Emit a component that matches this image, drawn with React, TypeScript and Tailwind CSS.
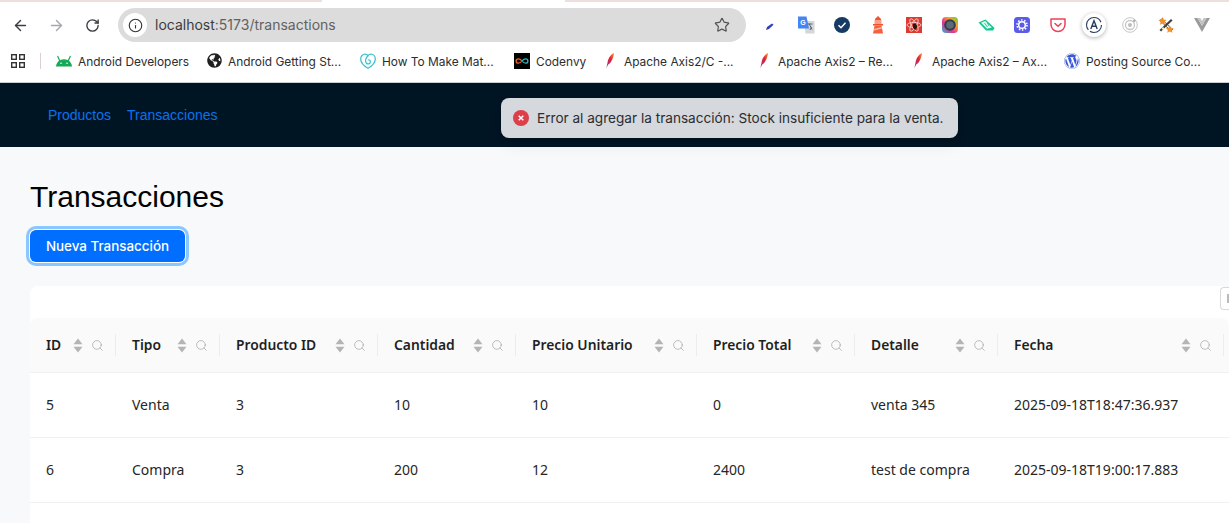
import { ArrowLeft, ArrowRight, Info, RotateCw, Search, Star } from "lucide-react";
import { FaGlobeAmericas, FaWordpress } from "react-icons/fa";

const inter = "font-['Inter','Noto_Sans',sans-serif]";

function Feather() {
  return (
    <svg width="10" height="18" viewBox="0 0 10 18">
      <defs>
        <linearGradient id="feather" x1="1" y1="0" x2="0" y2="1">
          <stop offset="0" stopColor="#f59a23" />
          <stop offset="0.4" stopColor="#e0253a" />
          <stop offset="0.8" stopColor="#b0287a" />
          <stop offset="1" stopColor="#cfcfd8" />
        </linearGradient>
      </defs>
      <path d="M9 1C5.500 2.500 3 6.500 2.500 11L1 17l2.200-4.600C6.500 11 8.500 5.500 9 1z" fill="url(#feather)" />
    </svg>
  );
}

function AndroidHead() {
  return (
    <svg width="16" height="12" viewBox="0 0 16 12">
      <path d="M0 11.500C.3 7.500 3.500 4.300 8 4.300s7.700 3.200 8 7.200z" fill="#18a957" />
      <path d="M3.600 5.600 1.800 1.400M12.400 5.600l1.800-4.200" stroke="#18a957" strokeWidth="1.200" strokeLinecap="round" />
      <circle cx="5" cy="8.300" r=".8" fill="#fff" />
      <circle cx="11" cy="8.300" r=".8" fill="#fff" />
    </svg>
  );
}

function SwirlHeart() {
  return (
    <svg width="16" height="16" viewBox="0 0 16 16" fill="none" stroke="#3cc3cf" strokeWidth="1.300">
      <path d="M8 15.200C3.200 12.500.7 9.500.7 6c0-2.800 2.100-4.800 4.500-4.800 1.300 0 2.200.6 2.800 1.400.7-.8 1.600-1.400 2.800-1.400 2.400 0 4.500 2 4.500 4.800 0 3.500-2.500 6.500-7.300 9.200z" />
      <path d="M8 2.800C5.800 5 4.800 7.800 6.300 10c1.200 1.600 3.800 1 4.100-.9.200-1.400-.9-2.400-2.200-2.200" />
    </svg>
  );
}

function Codenvy() {
  return (
    <svg width="16" height="16" viewBox="0 0 16 16" fill="none" strokeWidth="1.300">
      <rect width="16" height="16" fill="#000" />
      <path d="M8 8C6.800 6.300 5.600 5.800 4.300 5.800A2.200 2.200 0 0 0 4.300 10.200C5.600 10.200 6.800 9.700 8 8" stroke="#e8622c" />
      <path d="M8 8c1.200-1.700 2.400-2.200 3.700-2.200a2.200 2.200 0 0 1 0 4.400C10.400 10.200 9.200 9.700 8 8" stroke="#27b5c9" />
    </svg>
  );
}

const bookmarks = [
  { label: "Android Developers", width: "w-[150px]", icon: <AndroidHead /> },
  { label: "Android Getting St...", width: "w-[154px]", icon: <FaGlobeAmericas size={15} color="#1f1f1f" /> },
  { label: "How To Make Mat...", width: "w-[154px]", icon: <SwirlHeart /> },
  { label: "Codenvy", width: "w-[88px]", icon: <Codenvy /> },
  { label: "Apache Axis2/C -...", width: "w-[154px]", icon: <Feather /> },
  { label: "Apache Axis2 – Re...", width: "w-[154px]", icon: <Feather /> },
  { label: "Apache Axis2 – Ax...", width: "w-[154px]", icon: <Feather /> },
  { label: "Posting Source Co...", width: "w-[160px]", icon: <FaWordpress size={16} color="#3858d6" /> },
];

function Ext({ children }: { children: React.ReactNode }) {
  return <div className="w-9 h-[34px] flex items-center justify-center shrink-0">{children}</div>;
}

function ExtensionIcons() {
  return (
    <div className="flex items-center ml-[6px]">
      <Ext>
        <svg width="16" height="16" viewBox="0 0 16 16"><path d="M4 13 5 10 10 6.500 11.500 7.800 7 12z" fill="#2f3fb8" /></svg>
      </Ext>
      <Ext>
        <svg width="18" height="18" viewBox="0 0 18 18">
          <path d="M7 5h10.500v12.500H8.500z" fill="#d6d6d6" />
          <path d="M12 7.500l3 6M15.500 8h-4.500M13 14l1.500-3" stroke="#5b6470" strokeWidth="1" fill="none" />
          <path d="M1 .5h8.500L12 12.500H1z" fill="#4285f4" />
          <text x="3.200" y="8.800" fontSize="7" fontWeight="700" fill="#fff" fontFamily="Liberation Sans, sans-serif">G</text>
        </svg>
      </Ext>
      <Ext>
        <svg width="16" height="16" viewBox="0 0 16 16">
          <circle cx="8" cy="8" r="8" fill="#163a63" />
          <path d="M4.500 8.300 7 10.700 11.500 5.800" stroke="#fff" strokeWidth="1.500" fill="none" />
        </svg>
      </Ext>
      <Ext>
        <svg width="14" height="18" viewBox="0 0 14 18">
          <path d="M7 0 10 3v1H4V3z" fill="#f2502e" />
          <rect x="3.500" y="4" width="7" height="4" fill="#f6a089" />
          <rect x="2" y="8" width="10" height="1.500" fill="#f2502e" />
          <path d="M3.500 9.500h7l1.500 8H2z" fill="#f4613f" />
          <path d="M3 13l8-2v1.500l-8 2z" fill="#fbb8a6" />
        </svg>
      </Ext>
      <Ext>
        <svg width="16" height="16" viewBox="0 0 16 16">
          <rect width="16" height="16" fill="#dc3b32" />
          <g fill="none" stroke="#f8d8d4" strokeWidth=".8">
            <ellipse cx="8" cy="8" rx="7" ry="2.600" />
            <ellipse cx="8" cy="8" rx="7" ry="2.600" transform="rotate(60 8 8)" />
            <ellipse cx="8" cy="8" rx="7" ry="2.600" transform="rotate(120 8 8)" />
          </g>
          <path d="M7 7l3-.5 1.500 3.500-2.500 3L7 10.500z" fill="#2a1512" />
        </svg>
      </Ext>
      <Ext>
        <svg width="16" height="16" viewBox="0 0 16 16">
          <defs>
            <linearGradient id="rainbow" x1="0" y1="1" x2="1" y2="0">
              <stop offset="0" stopColor="#20c4c4" />
              <stop offset="0.35" stopColor="#e02f9c" />
              <stop offset="0.7" stopColor="#f6a623" />
              <stop offset="1" stopColor="#4fd04f" />
            </linearGradient>
          </defs>
          <rect width="16" height="16" rx="4" fill="url(#rainbow)" />
          <circle cx="8" cy="8" r="5.800" fill="#2f3e4c" />
          <circle cx="8" cy="8" r="3.800" fill="#5b6b7a" />
        </svg>
      </Ext>
      <Ext>
        <svg width="17" height="12" viewBox="0 0 17 12">
          <path d="M.5 3.500 7.500.5 16.500 9 15 11.500H8z" fill="#0fc78f" />
          <path d="M3 3.800 7.200 2 13.800 8.500 9 9.700z" fill="#e2fcf3" />
          <path d="M6.500 4 9.500 8M9.500 4l1.500 3" stroke="#0fc78f" strokeWidth=".9" />
        </svg>
      </Ext>
      <Ext>
        <svg width="16" height="16" viewBox="0 0 16 16">
          <rect width="16" height="16" rx="3.500" fill="#5a5be6" />
          <circle cx="8" cy="8" r="3.300" fill="none" stroke="#fff" strokeWidth="1.500" />
          <circle cx="8" cy="8" r="5" fill="none" stroke="#fff" strokeWidth="1.600" strokeDasharray="1.500 1.640" />
        </svg>
      </Ext>
      <Ext>
        <svg width="16" height="15" viewBox="0 0 16 15" fill="none" stroke="#ee4056" strokeWidth="1.500">
          <path d="M1 1h14v5.500a7 7 0 0 1-14 0z" strokeLinejoin="round" />
          <path d="M5 5.500 8 8.300l3-2.800" strokeLinecap="round" />
        </svg>
      </Ext>
      <Ext>
        <div className="w-6 h-6 rounded-full bg-white shadow-[0_1px_4px_rgba(0,0,0,0.3)] flex items-center justify-center">
          <svg width="18" height="18" viewBox="0 0 18 18">
            <circle cx="9" cy="9" r="7.500" fill="none" stroke="#27405f" strokeWidth="1.100" strokeDasharray="16 2 26 3" />
            <path d="M5.800 13 9 4.800l3.200 8.200M7 10.300h4" fill="none" stroke="#27405f" strokeWidth="1.400" />
          </svg>
        </div>
      </Ext>
      <Ext>
        <svg width="16" height="16" viewBox="0 0 16 16" fill="none" stroke="#c6c6c6" strokeWidth="1">
          <circle cx="8" cy="8" r="7.300" />
          <circle cx="8" cy="8" r="4.500" strokeWidth="1.300" />
          <circle cx="8" cy="8" r="2" fill="#bdbdbd" stroke="none" />
          <circle cx="12.300" cy="3.700" r="1.200" fill="#a9a9a9" stroke="none" />
        </svg>
      </Ext>
      <Ext>
        <svg width="16" height="16" viewBox="0 0 16 16">
          <path d="M2 3.500 3.500 2 14.500 12.500 13 14z" fill="#fff" stroke="#3f3f3f" strokeWidth=".9" />
          <path d="M1.500 13 13 2l1.500 1.500L3 14.500z" fill="#3f3f3f" />
          <path d="M5 10l1.500 1.500-1.500 1.500L3.500 11.500z" fill="#eee" />
          <path d="M4.500 0l1.300 2.600 2.700.4-2 1.900.5 2.800-2.500-1.300L2 7.700l.5-2.800-2-1.900 2.700-.4z" fill="#f0912d" />
          <path d="M11.800 8.200l1.300 2.500 2.700.4-2 2 .5 2.700-2.500-1.300-2.500 1.300.5-2.700-2-2 2.700-.4z" fill="#f0912d" />
        </svg>
      </Ext>
      <Ext>
        <svg width="16" height="14" viewBox="0 0 16 14">
          <path d="M0 0h3.500L8 7.800 12.500 0H16L8 14z" fill="#9a9a9a" />
          <path d="M3.500 0h2.800L8 3 9.700 0h2.800L8 7.800z" fill="#c2c2c2" />
        </svg>
      </Ext>
    </div>
  );
}

function BrowserChrome() {
  return (
    <div className={`h-[83px] shrink-0 bg-white border-b border-[#c9ced1] overflow-hidden ${inter}`}>
      <div className="flex h-[2px]">
        <div className="w-[322px] bg-[#ecdfdd]" />
        <div className="w-[243px] bg-white" />
        <div className="flex-1 bg-[#ecdfdd]" />
      </div>
      <div className="flex items-center h-[34px] mt-[6px]">
        <div className="w-9 ml-[2px] flex justify-center"><ArrowLeft size={17} strokeWidth={2} color="#3b3d40" /></div>
        <div className="w-9 flex justify-center"><ArrowRight size={17} strokeWidth={2} color="#a5a7aa" /></div>
        <div className="w-9 flex justify-center"><RotateCw size={15} strokeWidth={2.200} color="#3b3d40" /></div>
        <div className="ml-[8px] w-[628px] h-[34px] rounded-full bg-[#dcdcdc] flex items-center pl-[5px] pr-[16px]">
          <div className="w-6 h-6 rounded-full bg-white flex items-center justify-center">
            <Info size={15} strokeWidth={1.800} color="#333" />
          </div>
          <div className="ml-2 pb-[2px] text-[14px] text-[#3c3c3c]">
            localhost<span className="text-[#626262]">:5173/transactions</span>
          </div>
          <Star size={16} strokeWidth={1.800} color="#555" className="ml-auto" />
        </div>
        <ExtensionIcons />
      </div>
      <div className="flex items-center h-5 mt-[9px] text-[11.9px] text-[#2b2d30] whitespace-nowrap">
        <svg width="14" height="14" viewBox="0 0 14 14" className="ml-[11px]" fill="none" stroke="#333" strokeWidth="1.400">
          <rect x=".7" y=".7" width="4.600" height="4.600" />
          <rect x="8.700" y=".7" width="4.600" height="4.600" />
          <rect x=".7" y="8.700" width="4.600" height="4.600" />
          <rect x="8.700" y="8.700" width="4.600" height="4.600" />
        </svg>
        <div className="w-px h-4 bg-[#dcd0cf] ml-[15px] mr-[15px]" />
        {bookmarks.map((b) => (
          <div key={b.label} className={`flex items-center gap-[6px] shrink-0 ${b.width}`}>
            <div className="w-4 flex justify-center shrink-0">{b.icon}</div>
            <span className="pt-[2px]">{b.label}</span>
          </div>
        ))}
      </div>
    </div>
  );
}

const columns = ["ID", "Tipo", "Producto ID", "Cantidad", "Precio Unitario", "Precio Total", "Detalle", "Fecha"];

const rows = [
  ["5", "Venta", "3", "10", "10", "0", "venta 345", "2025-09-18T18:47:36.937"],
  ["6", "Compra", "3", "200", "12", "2400", "test de compra", "2025-09-18T19:00:17.883"],
];

const grid = "grid grid-cols-[86px_104px_158px_138px_181px_158px_143px_226px_1fr]";

function SortArrows() {
  return (
    <svg width="10" height="15" viewBox="0 0 10 15" fill="#b4b4b4">
      <path d="M5 .5 9.500 6.300H.5z" />
      <path d="M5 14.500.5 8.700h9z" />
    </svg>
  );
}

function TransactionsTable() {
  return (
    <div className="relative bg-white rounded-t-lg pt-8 w-[1199px] h-[240px]">
      <div className="absolute top-[1px] right-0 w-[9px] h-[23px] bg-white border border-r-0 border-[#d9d9d9] rounded-l-[4px] flex items-center justify-end">
        <div className="w-[2px] h-[9px] bg-[#bbbbbb]" />
      </div>
      <div className={`${grid} h-[55px] bg-[#fafafa] border-b border-[#f0f0f0] rounded-t-lg`}>
        {columns.map((c) => (
          <div key={c} className="relative flex items-center pl-4 pr-[12px] text-[13.85px] font-semibold text-[#1f1f1f]">
            <span className="flex-1">{c}</span>
            <SortArrows />
            <Search size={13} strokeWidth={1.400} color="#ababab" className="ml-[8px]" />
            <div className="absolute right-0 top-[16px] w-px h-[22px] bg-[#ededed]" />
          </div>
        ))}
        <div />
      </div>
      {rows.map((r) => (
        <div key={r[0]} className={`${grid} h-[65px] border-b border-[#f0f0f0] text-[14px] text-[#262626]`}>
          {r.map((v, i) => (
            <div key={i} className="flex items-center pl-4 pb-[2px] whitespace-nowrap">{v}</div>
          ))}
          <div />
        </div>
      ))}
    </div>
  );
}

export default function App() {
  return (
    <div className="relative h-[523px] w-[1229px] overflow-hidden flex flex-col bg-[#f8f9fb]">
      <BrowserChrome />
      <header className="h-16 shrink-0 bg-[#001524] flex items-center gap-4 pl-12 font-['Liberation_Sans',sans-serif] text-[14px] text-[#0b72ee]">
        <span>Productos</span>
        <span>Transacciones</span>
      </header>
      <main className="flex-1 pl-[30px] pt-8">
        <h1 className="font-['Liberation_Sans',sans-serif] text-[30px] leading-9 text-black">Transacciones</h1>
        <button className={`mt-[15px] w-[155px] h-8 rounded-md bg-[#006eff] text-white text-[13.4px] font-medium shadow-[0_0_0_1px_#fff,0_0_0_4px_#8ac6ff] ${inter}`}>
          Nueva Transacción
        </button>
        <div className="mt-6">
          <TransactionsTable />
        </div>
      </main>
      <div className={`absolute top-[98px] left-[501px] w-[457px] h-10 rounded-lg bg-[#d5d8dc] shadow-[0_6px_16px_rgba(0,0,0,0.08),0_3px_6px_rgba(0,0,0,0.12)] flex items-center pl-3 text-[13.6px] text-[#2a2d31] whitespace-nowrap ${inter}`}>
        <svg width="16" height="16" viewBox="0 0 16 16" className="mr-2">
          <circle cx="8" cy="8" r="8" fill="#dc3e4a" />
          <path d="M5.700 5.700 10.300 10.300M10.300 5.700 5.700 10.300" stroke="#fff" strokeWidth="1.500" />
        </svg>
        <span>Error al agregar la transacción: Stock insuficiente para la venta.</span>
      </div>
    </div>
  );
}
